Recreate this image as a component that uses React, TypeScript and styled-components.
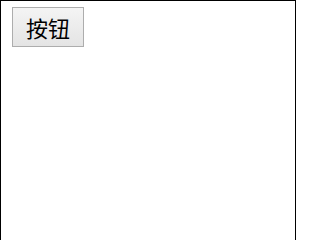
import React from "react";
import styled, { createGlobalStyle } from "styled-components";

const GlobalStyle = createGlobalStyle`
    html, body {
        margin: 0;
        padding: 0;
        background: #ffffff;
    }
    body {
        font-family: "Noto Sans CJK SC", "Noto Sans", sans-serif;
    }
`;

// frame runs off the bottom of the window, so no bottom edge shows
const Frame = styled.div`
    box-sizing: border-box;
    width: 296px;
    min-height: 100vh;
    border: 1px solid #000000;
    border-bottom: 0;
    padding: 6px 11px;
`;

const Button = styled.button`
    box-sizing: border-box;
    height: 40px;
    padding: 0 13px;
    border: 1px solid #adadad;
    border-radius: 0;
    background: linear-gradient(#f4f4f4, #e4e4e4);
    font-family: "Noto Sans CJK SC", sans-serif;
    font-size: 22px;
    line-height: 38px;
    color: #000000;
    cursor: pointer;
`;

const App = () => {
    return (
        <>
            <GlobalStyle />
            <Frame>
                <Button>按钮</Button>
            </Frame>
        </>
    );
};

export default App;
